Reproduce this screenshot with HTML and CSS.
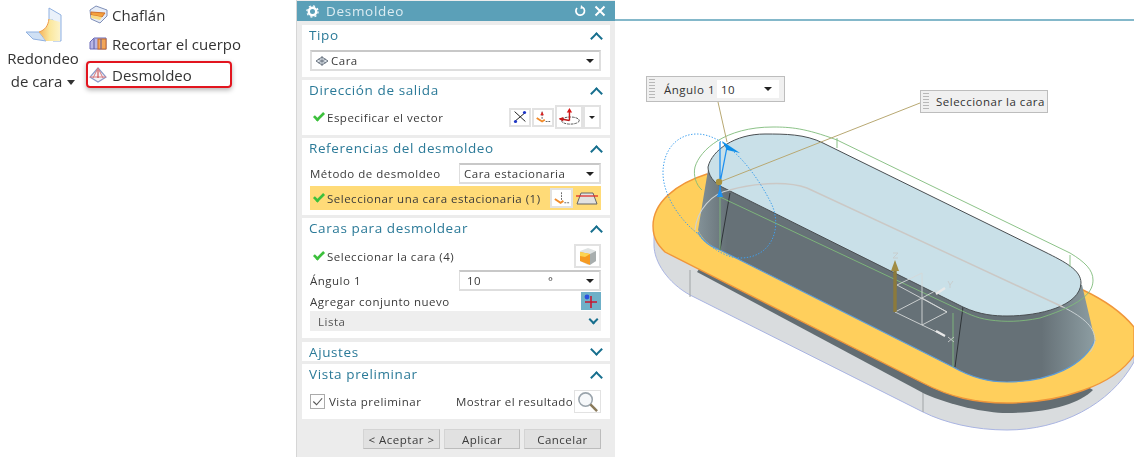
FILE: index.html
```html
<!DOCTYPE html>
<html lang="es">
<head>
<meta charset="utf-8">
<title>Desmoldeo</title>
<link rel="stylesheet" href="styles.css">
</head>
<body>
<div class="app">
  <aside class="ribbon">
    <div class="ribbon-large">
      <svg class="icon-large" viewBox="20 6 42 38" width="42" height="38">
        <defs>
          <linearGradient id="blend" x1="0" y1="0" x2="1" y2="0">
            <stop offset="0" stop-color="#f6b25a"/>
            <stop offset=".5" stop-color="#fbe79c"/>
            <stop offset="1" stop-color="#fdf3c8"/>
          </linearGradient>
        </defs>
        <path d="M48 8 L60 15 V41 H52 V20 L48 20 Z" fill="#eaf1fa" stroke="#8fb0e0"/>
        <path d="M25 32 L38 32 L45 41 L32 39 Z" fill="#cfe0f4" stroke="#8fb0e0"/>
        <path d="M48 19 L59 22 V41 L45 41 C42 37 40 34 38 32 C44 30 47 26 48 19 Z" fill="url(#blend)"/>
        <path d="M48 19 C47 26 44 30 38 32" fill="none" stroke="#ee9a48"/>
      </svg>
      <div class="large-label">Redondeo<br>de cara <span class="caret"></span></div>
    </div>
    <div class="ribbon-list">
      <div class="ribbon-item">
        <svg viewBox="0 0 20 20" width="20" height="20">
          <path d="M2 5 L8 1 L19 5 V11 L12 18 L3 14 Z" fill="#e6ecf6" stroke="#7f8fb8"/>
          <path d="M3 7 L17 8 L14 12 L3 10 Z" fill="#f4a13c" stroke="#d0702a"/>
          <path d="M3 10 L14 12 L12 15 L3 13 Z" fill="#f9dc85"/>
        </svg>
        <span>Chaflán</span>
      </div>
      <div class="ribbon-item">
        <svg viewBox="0 0 20 16" width="20" height="16">
          <path d="M2 6 L6 2 L18 2 L18 13 L2 13 Z" fill="#b9b7e6" stroke="#6a6ab8"/>
          <rect x="10" y="3" width="8" height="10" fill="#f2a65a" stroke="#c66a2a"/>
          <path d="M6 3 V13 M13 3 V13" stroke="#5a5aa0"/>
        </svg>
        <span>Recortar el cuerpo</span>
      </div>
      <div class="ribbon-item ribbon-item-marked">
        <svg viewBox="0 0 20 18" width="20" height="18">
          <path d="M10 2 L18 11 L10 16 L2 11 Z" fill="#f4f2f5" stroke="#8d9ac8" stroke-width="1.2"/>
          <path d="M10 2 L5 12 M10 2 L15 12 M2 11 L18 11" stroke="#d87a80"/>
          <path d="M10 4 V12" stroke="#c83a3a"/>
        </svg>
        <span>Desmoldeo</span>
      </div>
    </div>
  </aside>

  <section class="dialog">
    <header class="dialog-title">
      <svg viewBox="0 0 14 14" width="13" height="13"><circle cx="7" cy="7" r="4" fill="none" stroke="#fff" stroke-width="2.6"/><circle cx="7" cy="7" r="6" fill="none" stroke="#fff" stroke-width="1.4" stroke-dasharray="2.2 2.5"/></svg>
      <span class="dialog-name">Desmoldeo</span>
      <svg class="title-tool" viewBox="0 0 12 12" width="12" height="12"><path d="M3 3 A4.3 4.3 0 1 0 9 2.6" fill="none" stroke="#fff" stroke-width="1.7"/><path d="M7 0 L10 3 L6.5 4 Z" fill="#fff"/></svg>
      <svg viewBox="0 0 12 12" width="12" height="12"><path d="M1.5 1.5 L10.5 10.5 M10.5 1.5 L1.5 10.5" stroke="#fff" stroke-width="2"/></svg>
    </header>

    <div class="panel panel-tipo">
      <div class="panel-head"><span>Tipo</span><span class="chev up"></span></div>
      <div class="select select-wide">
        <svg viewBox="0 0 14 12" width="14" height="12"><path d="M1 6 L7 2 L13 6 L7 10 Z" fill="#dde3ea" stroke="#6a7480"/><path d="M7 1 V11 M3 4 L11 8 M11 4 L3 8" stroke="#6a7480" stroke-width=".8"/></svg>
        <span>Cara</span><span class="drop"></span>
      </div>
    </div>

    <div class="panel panel-dir">
      <div class="panel-head"><span>Dirección de salida</span><span class="chev up"></span></div>
      <div class="row row-dir">
        <span class="check"></span><span class="label-grow">Especificar el vector</span>
        <span class="tool tool-s"><svg viewBox="0 0 20 18" width="20" height="18"><path d="M4 3 L16 14 M16 4 L4 14" stroke="#222" stroke-width="1.1"/><circle cx="15" cy="4" r="1.8" fill="#2038c8"/><circle cx="5" cy="14" r="1.8" fill="#2038c8"/></svg></span>
        <span class="tool tool-s"><svg viewBox="0 0 20 18" width="20" height="18"><path d="M9 3 V12 M13 14 H18" stroke="#555" stroke-dasharray="2 1"/><path d="M9 3 L7 7 H11 Z" fill="#d82020"/><path d="M3 10 L9 14 L12 12" stroke="#f08a2a" stroke-width="2" fill="none"/></svg></span>
        <span class="tool tool-l"><svg viewBox="0 0 27 22" width="27" height="22"><ellipse cx="15" cy="15" rx="10" ry="4" fill="none" stroke="#444" stroke-dasharray="3 1"/><path d="M14 3 V15" stroke="#c81818" stroke-width="1.6"/><path d="M14 1 L11 6 H17 Z" fill="#d81818"/><path d="M3 13 L14 15" stroke="#b81818" stroke-width="1.6"/><path d="M2 13 L7 11 V16 Z" fill="#c81818"/></svg></span>
        <span class="tool tool-d"><span class="drop drop-small"></span></span>
      </div>
    </div>

    <div class="panel panel-ref">
      <div class="panel-head"><span>Referencias del desmoldeo</span><span class="chev up"></span></div>
      <div class="row row-field">
        <span class="label-grow">Método de desmoldeo</span>
        <div class="select select-field"><span>Cara estacionaria</span><span class="drop"></span></div>
      </div>
      <div class="row row-hl">
        <span class="check"></span><span class="label-grow">Seleccionar una cara estacionaria (1)</span>
        <span class="tool tool-hl"><svg viewBox="0 0 20 18" width="20" height="18"><path d="M10 3 V12 M13 14 H18" stroke="#666" stroke-dasharray="2 1"/><path d="M3 10 L9 14 L12 12" stroke="#f08a2a" stroke-width="2" fill="none"/></svg></span>
        <span class="tool-flat"><svg viewBox="0 0 24 16" width="24" height="16"><path d="M6 3 H18 L22 14 H2 Z" fill="#e2e2e2" stroke="#666"/><path d="M1 6 H23" stroke="#e02020" stroke-width="1.2"/></svg></span>
      </div>
    </div>

    <div class="panel panel-caras">
      <div class="panel-head"><span>Caras para desmoldear</span><span class="chev up"></span></div>
      <div class="row row-sel">
        <span class="check"></span><span class="label-grow">Seleccionar la cara (4)</span>
        <span class="tool tool-cube"><svg viewBox="0 0 22 22" width="22" height="22"><path d="M3 6 L11 3 L19 6 V16 L11 20 L3 16 Z" fill="#dfe3e3"/><path d="M3 7 L13 9 V20 L3 16 Z" fill="#f59a22"/><path d="M3 7 L13 9 L8 12 L3 11 Z" fill="#fcd552"/><path d="M13 9 L19 6 V16 L13 20 Z" fill="#a8aeae"/></svg></span>
      </div>
      <div class="row row-field row-angle">
        <span class="label-grow">Ángulo 1</span>
        <div class="select select-field select-angle"><span class="angle-value">10</span><span class="angle-unit">°</span><span class="drop"></span></div>
      </div>
      <div class="row row-add">
        <span class="label-grow">Agregar conjunto nuevo</span>
        <span class="tool-add"><svg viewBox="0 0 20 18" width="20" height="18"><path d="M10 4 V16 M4 10 H16" stroke="#c81830" stroke-width="1.6"/><circle cx="6" cy="5" r="2.4" fill="#2a50e0"/></svg></span>
      </div>
      <div class="row row-list"><span class="label-grow">Lista</span><span class="chev down small"></span></div>
    </div>

    <div class="panel panel-adj">
      <div class="panel-head"><span>Ajustes</span><span class="chev down"></span></div>
    </div>

    <div class="panel panel-prev">
      <div class="panel-head"><span>Vista preliminar</span><span class="chev up"></span></div>
      <div class="row row-prev">
        <span class="checkbox"><svg viewBox="0 0 14 14" width="13" height="13"><path d="M2.5 7 L6 10.5 L12 3.5" fill="none" stroke="#555" stroke-width="1.2"/></svg></span>
        <span class="label-grow">Vista preliminar</span>
        <span>Mostrar el resultado</span>
        <span class="tool tool-cube tool-mag"><svg viewBox="0 0 24 24" width="23" height="23"><circle cx="10" cy="10" r="7" fill="#f6f8fa" stroke="#9aa4ac" stroke-width="1.6"/><path d="M15 15 L22 22" stroke="#8a7a5a" stroke-width="2.6"/></svg></span>
      </div>
    </div>

    <footer class="dialog-actions">
      <button class="btn btn-accept">&lt; Aceptar &gt;</button>
      <button class="btn">Aplicar</button>
      <button class="btn btn-cancel">Cancelar</button>
    </footer>
  </section>

  <main class="canvas">
    <svg class="model" viewBox="615 0 519 457" width="519" height="457">
      <defs>
        <linearGradient id="wall" gradientUnits="userSpaceOnUse" x1="695" y1="0" x2="1098" y2="0">
          <stop offset="0" stop-color="#86959b"/>
          <stop offset=".08" stop-color="#667177"/>
          <stop offset=".86" stop-color="#667177"/>
          <stop offset="1" stop-color="#8fa0a5"/>
        </linearGradient>
      </defs>
      <path d="M615 20 H1134" stroke="#5ba0b8" stroke-width="1.6"/>
      <path d="M654 226 V245 C654 262 668 283 690 295 L923 412 C945 423 975 430 1007 430 C1060 430 1110 405 1134 362 V330 Z" fill="#d9dcde" stroke="#a9b4e2"/>
      <path d="M690 270 V297 M923 388 V412" stroke="#a0a4a6"/>
      <path d="M697 272 L925 394 C950 405 985 413 1007 413 C1050 413 1080 403 1093 390 L1060 370 L720 240 Z" fill="#636d72"/>
      <path d="M707 174 C675 184 653 203 653 226 C653 240 660 247 665 252 L923 383 C950 397 975 403 1007 403 C1060 403 1115 385 1134 355 V327 C1120 310 1100 298 1083 290 Z" fill="#ffcf5c" stroke="#f0963a" stroke-width="1.4"/>
      <path d="M708 170 L698 230 C703 240 710 246 720 250 L953 367 C972 378 990 382 1007 382 C1050 382 1085 365 1095 340 L1082 285 L722 180 Z" fill="url(#wall)"/>
      <path d="M698 232 C703 242 710 246 720 250 L953 367 C972 378 990 382 1007 382 C1050 382 1085 365 1095 340" fill="none" stroke="#5b9bd8" stroke-width="1.2"/>
      <path d="M730 193 L720 250 M963 307 L955 367" stroke="#2f3538" stroke-width="1"/>
      <path d="M722 187 L963 307 C980 315 995 316 1007 316 C1040 316 1080 306 1081 283 C1081 270 1065 262 1045 252 L823 143 C805 134 785 134 765 134 C735 134 712 150 708 167 C708 175 714 183 722 187 Z" fill="#c9e0e8" stroke="#4a4f52"/>
      <path d="M695 230 C697 210 712 193 730 190" fill="none" stroke="#ccd2d4" stroke-width="1.1"/>
      <path d="M730 190 C750 184 785 180 807 188 L1063 307" fill="none" stroke="#cbc8c5" stroke-width="1.5"/>
      <path d="M1063 307 C1085 318 1095 328 1095 340 C1094 346 1092 350 1090 352" fill="none" stroke="#c8d0d2" stroke-width="1"/>
      <path d="M695 167 C700 150 725 127 773 127 C790 127 805 128 837 140 L1070 253 C1085 262 1093 270 1093 280 C1093 290 1087 303 1040 318 C1020 322 1005 322 990 320 C975 318 965 312 960 310 L720 197 M720 197 V250 M837 138 V148 M1070 255 V267 M953 313 V367 M695 167 C693 175 696 185 702 190" fill="none" stroke="#7fbb7a" stroke-width=".9"/>
      <path d="M697 233 C680 220 663 195 663 173 C663 150 677 134 697 134 C725 134 755 170 772 205 C782 228 772 258 740 258 C725 258 708 246 697 233 Z" fill="none" stroke="#3fa0ee" stroke-width="1" stroke-dasharray="1.4 1.6"/>
      <path d="M718 102 L727 142 M920 103 L722 181" fill="none" stroke="#b8a872" stroke-width="1"/>
      <path d="M720 197 V181 M720 142 V180 M720 183 L727 147" fill="none" stroke="#1e90f0" stroke-width="1.3"/>
      <path d="M722 141 L740 153 L727 150 Z" fill="#0f8ee8"/>
      <path d="M720 187 L717 197 H723 Z" fill="#1e90f0"/>
      <circle cx="719" cy="182" r="3.2" fill="#a89340"/>
      <path d="M895 312 L922 298 L947 312 L922 325 Z M897 285 L922 273 V325 M897 285 L947 312 M922 298 L937 290 M922 325 L945 336" fill="none" stroke="#d5d8d8" stroke-width=".9"/>
      <path d="M895 312 V268" stroke="#8c7a3c" stroke-width="3.4"/>
      <path d="M895 260 L891 271 H899 Z" fill="#a08c44"/>
      <path d="M936 294 L945 288 M936 331 L945 336" stroke="#e8e8e8" stroke-width="2.4"/>
      <path d="M893 253 H898 L893 258 H898 M948 281 L950 285 L953 281 M950 285 V288 M948 337 L954 342 M954 337 L948 342" fill="none" stroke="#c8cccc" stroke-width=".9"/>
    </svg>
    <div class="callout callout-angle">
      <span class="grip"></span>
      <span class="callout-label">Ángulo 1</span>
      <div class="callout-input"><span>10</span><span class="drop"></span></div>
    </div>
    <div class="callout callout-face">
      <span class="grip"></span>
      <span class="callout-label">Seleccionar la cara</span>
    </div>
  </main>
</div>
</body>
</html>
```
FILE: styles.css
```css
* { box-sizing: border-box; }
html, body { margin: 0; padding: 0; background: #fff; }
body { width: 1134px; height: 457px; overflow: hidden; font-family: "Open Sans", "Noto Sans", sans-serif; color: #3a3a3a; }
.app { display: flex; width: 1134px; height: 457px; filter: blur(.5px); }

/* ribbon */
.ribbon { width: 296px; flex: none; display: flex; align-items: flex-start; font-size: 15px; color: #333; }
.ribbon-large { width: 86px; flex: none; padding-top: 6px; display: flex; flex-direction: column; align-items: center; }
.icon-large { margin-left: -2px; }
.large-label { margin-top: 3px; text-align: center; line-height: 23px; white-space: nowrap; }
.caret { display: inline-block; width: 0; height: 0; border: 4px solid transparent; border-top: 5px solid #333; border-bottom: 0; vertical-align: 2px; margin-left: 1px; }
.ribbon-list { display: flex; flex-direction: column; padding-top: 1px; gap: 1px; }
.ribbon-item { width: 146px; height: 28px; display: flex; align-items: center; gap: 4px; padding-left: 2px; white-space: nowrap; }
.ribbon-item svg { flex: none; width: 20px; }
.ribbon-item-marked { height: 27px; margin-top: 2px; border: 2px solid #e2151f; border-radius: 4px; box-shadow: 0 2px 5px rgba(0,0,0,.3); padding-left: 0; }

/* dialog */
.dialog { width: 319px; flex: none; height: 457px; padding: 1px 0 0; background: #ececec; border-left: 1px solid #d6d6d6; font-size: 11.5px; letter-spacing: .5px; }
.dialog-title { height: 20px; background: #5ba0b8; color: #dcecf2; display: flex; align-items: center; gap: 7px; padding: 0 9px; font-size: 13.5px; letter-spacing: 0; }
.dialog-name { flex: 1; letter-spacing: .7px; }
.title-tool { margin-right: 1px; }
.panel { margin: 3px 5px 0; background: #fff; padding: 0 9px 6px 8px; }
.panel-tipo { margin-top: 4px; }
.panel-head { height: 21px; padding-bottom: 1px; margin-left: -1px; display: flex; align-items: center; justify-content: space-between; color: #2b7a98; font-size: 13.5px; letter-spacing: .6px; }
.chev { display: block; width: 9px; height: 9px; border: solid #176f8e; border-width: 2.4px 0 0 2.4px; }
.chev.up { transform: translateY(3px) rotate(45deg); }
.chev.down { transform: translateY(-2px) rotate(225deg); }
.chev.small { width: 7px; height: 7px; margin-right: 4px; border-width: 2px 0 0 2px; }
.panel-adj { height: 19px; padding-bottom: 0; margin-top: 4px; }
.panel-adj .panel-head { height: 19px; padding-bottom: 0; }

.select { display: flex; align-items: center; gap: 4px; height: 21px; border: 2px solid #dedede; border-top-color: #c8c8c8; background: #fff; padding: 0 5px; }
.select-wide { margin-top: 4px; gap: 2px; padding-left: 3px; }
.select span:first-of-type { flex: 1; }
.drop { width: 0; height: 0; border: 4.5px solid transparent; border-top: 4.5px solid #222; border-bottom: 0; flex: none; }
.drop-small { border-width: 3.5px; border-bottom: 0; }

.row { display: flex; align-items: center; }
.label-grow { flex: 1; white-space: nowrap; }
.check { flex: none; width: 12px; height: 7px; margin: -3px 2px 0 3px; border: solid #3cc03c; border-width: 0 0 3px 3px; transform: rotate(-45deg) scale(.9); }
.tool { display: flex; align-items: center; justify-content: center; background: #fff; border: 2px solid #e2e2e2; }
.row-dir { padding-top: 4px; height: 28px; }
.tool-s { width: 22px; height: 19px; margin-left: 1px; }
.tool-l { width: 28px; height: 24px; margin-left: 1px; }
.tool-d { width: 18px; height: 24px; }
.row-field { margin-top: 4px; height: 21px; }
.select-field { width: 142px; flex: none; border-left-width: 1px; border-right-width: 2px; padding-left: 4px; }
.row-hl { margin-top: 2px; height: 24px; background: #ffdb78; }
.tool-hl { width: 23px; height: 20px; background: #fff; }
.tool-flat { width: 28px; display: flex; justify-content: center; }
.panel-ref { padding-bottom: 5px; }
.row-sel { margin-top: 5px; height: 24px; }
.tool-cube { width: 27px; height: 24px; flex: none; }
.row-angle { margin-top: 2px; }
.select.select-angle .angle-value { flex: none; width: 80px; padding-left: 3px; }
.angle-unit { flex: 1; }
.row-add { margin-top: 1px; height: 18px; }
.tool-add { width: 20px; height: 18px; background: #6fb0c8; display: flex; align-items: center; justify-content: center; }
.row-list { margin-top: 1px; height: 20px; background: #eeeeee; padding-left: 8px; color: #555; }
.panel-caras { padding-bottom: 7px; }
.row-prev { margin-top: 5px; height: 23px; }
.checkbox { width: 15px; height: 15px; flex: none; border: 1px solid #aaa; margin-right: 4px; display: flex; align-items: center; justify-content: center; background: #fdfdfd; }
.row-prev > span:nth-child(3) { letter-spacing: .4px; }
.tool-mag { margin-left: 1px; height: 23px; border-width: 1px; }

.dialog-actions { display: flex; justify-content: flex-end; gap: 4px; padding: 10px 14px 0 0; }
.btn { height: 20px; width: 76px; padding: 0; border: 1px solid #cfcfcf; border-color: #d4d4d4 #bcbcbc #bcbcbc #d4d4d4; background: #e1e1e1; color: #3a3a3a; font: inherit; letter-spacing: .5px; }
.btn-accept, .btn-cancel { width: 77px; }

/* canvas */
.canvas { position: relative; flex: 1; min-width: 0; }
.model { position: absolute; left: 0; top: 0; display: block; }
.callout { position: absolute; display: flex; align-items: center; background: #f0f0f0; border: 1px solid #bdbdbd; font-size: 11.5px; letter-spacing: .5px; white-space: nowrap; color: #333; }
.grip { width: 6px; align-self: stretch; margin: 2px 0 2px 2px; background: repeating-linear-gradient(#b8b8b8 0 1px, transparent 1px 3px); }
.callout-angle { left: 31px; top: 76px; width: 139px; height: 26px; }
.callout-angle .callout-label { margin-left: 9px; width: 53px; }
.callout-input { width: 62px; height: 18px; background: #fff; display: flex; align-items: center; justify-content: space-between; padding: 0 7px 0 4px; }
.callout-face { left: 305px; top: 90px; width: 128px; height: 23px; }
.callout-face .callout-label { margin-left: 7px; }
```
